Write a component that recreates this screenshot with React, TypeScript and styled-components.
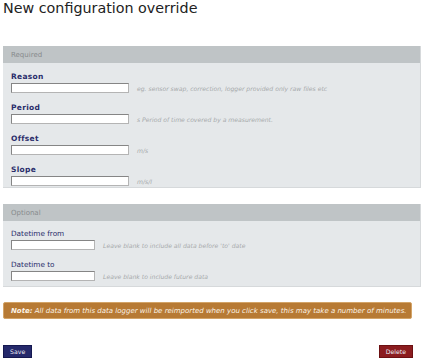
import React from 'react';
import styled, { createGlobalStyle } from 'styled-components';

const GlobalStyle = createGlobalStyle`
  html, body { margin: 0; padding: 0; background: #ffffff; }
  body { font-family: "DejaVu Sans", Verdana, sans-serif; }
`;

const Page = styled.div`
  width: 425px;
  padding: 0 3px;
  box-sizing: border-box;
`;

const Title = styled.h1`
  margin: 0;
  font-size: 14.3px;
  line-height: 17px;
  font-weight: normal;
  color: #222;
`;

const Panel = styled.section<{ $top: number }>`
  margin-top: ${({ $top }) => $top}px;
  width: 417px;
  background: #e5e8ea;
  border-bottom: 1px solid #d6d9db;
  border-right: 1px solid #d6d9db;
`;

const PanelHeader = styled.div`
  height: 17px;
  display: flex;
  align-items: center;
  padding: 0 8px;
  background: #bfc4c6;
  color: #878b8d;
  font-size: 7px;
`;

const PanelBody = styled.div<{ $pt: number; $pb: number }>`
  display: flex;
  flex-direction: column;
  gap: 9px;
  padding: ${({ $pt }) => $pt}px 8px ${({ $pb }) => $pb}px;
`;

const Field = styled.div`
  display: flex;
  flex-direction: column;
  gap: 1px;
`;

const Label = styled.label<{ $bold?: boolean }>`
  font-size: ${({ $bold }) => ($bold ? '7.5px' : '7.3px')};
  line-height: 11px;
  font-weight: ${({ $bold }) => ($bold ? 'bold' : 'normal')};
  letter-spacing: ${({ $bold }) => ($bold ? '0.3px' : '0')};
  color: #2a2d6a;
`;

const Row = styled.div`
  display: flex;
  align-items: center;
  gap: 8px;
`;

const Input = styled.input<{ $w: number }>`
  width: ${({ $w }) => $w}px;
  height: 10px;
  box-sizing: border-box;
  margin: 0;
  padding: 0;
  background: #fff;
  border: 1px solid #b4b4b4;
  border-top-color: #858585;
  border-left-color: #858585;
`;

const Hint = styled.span`
  font-size: 6.1px;
  font-style: italic;
  color: #a6a9ab;
  white-space: nowrap;
`;

const Note = styled.div`
  margin-top: 15px;
  width: 409px;
  height: 17px;
  box-sizing: border-box;
  display: flex;
  align-items: center;
  padding: 0 7px;
  background: #b77a34;
  border: 1px solid #d3a468;
  border-radius: 2px;
  color: #fbf2e6;
  font-size: 7px;
  font-style: italic;
  white-space: nowrap;
  b { font-weight: bold; }
`;

const Actions = styled.div`
  margin-top: 26px;
  width: 410px;
  display: flex;
  justify-content: space-between;
`;

const Button = styled.button<{ $danger?: boolean }>`
  height: 13px;
  padding: 0 6px;
  border: 1px solid ${({ $danger }) => ($danger ? '#6c1012' : '#151850')};
  background: ${({ $danger }) => ($danger ? '#8b1c1f' : '#25296b')};
  color: #e8e8f0;
  font-family: "DejaVu Sans", Verdana, sans-serif;
  font-size: 6.2px;
  line-height: 11px;
  cursor: pointer;
`;

const required = [
  { label: 'Reason', hint: 'eg. sensor swap, correction, logger provided only raw files etc' },
  { label: 'Period', hint: 's Period of time covered by a measurement.' },
  { label: 'Offset', hint: 'm/s' },
  { label: 'Slope', hint: 'm/s/l' },
];

const optional = [
  { label: 'Datetime from', hint: "Leave blank to include all data before 'to' date" },
  { label: 'Datetime to', hint: 'Leave blank to include future data' },
];

export default function App() {
  return (
    <Page>
      <GlobalStyle />
      <Title>New configuration override</Title>

      <Panel $top={29}>
        <PanelHeader>Required</PanelHeader>
        <PanelBody $pt={8} $pb={1}>
          {required.map((f) => (
            <Field key={f.label}>
              <Label $bold>{f.label}</Label>
              <Row>
                <Input $w={118} />
                <Hint>{f.hint}</Hint>
              </Row>
            </Field>
          ))}
        </PanelBody>
      </Panel>

      <Panel $top={16}>
        <PanelHeader>Optional</PanelHeader>
        <PanelBody $pt={7} $pb={5}>
          {optional.map((f) => (
            <Field key={f.label}>
              <Label>{f.label}</Label>
              <Row>
                <Input $w={84} />
                <Hint>{f.hint}</Hint>
              </Row>
            </Field>
          ))}
        </PanelBody>
      </Panel>

      <Note>
        <b>Note:</b>&nbsp;All data from this data logger will be reimported when you click save, this may take a number of minutes.
      </Note>

      <Actions>
        <Button>Save</Button>
        <Button $danger>Delete</Button>
      </Actions>
    </Page>
  );
}
